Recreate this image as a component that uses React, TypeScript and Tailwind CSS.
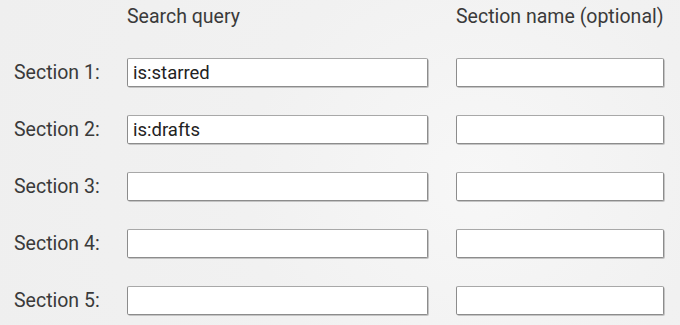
const rows = [
  { label: 'Section 1:', query: 'is:starred' },
  { label: 'Section 2:', query: 'is:drafts' },
  { label: 'Section 3:', query: '' },
  { label: 'Section 4:', query: '' },
  { label: 'Section 5:', query: '' },
]

const inputClass =
  'h-[29px] w-full rounded-[2px] border border-[#8c8c8c] border-t-[#a8a8a8] bg-white px-[5px] text-[18.5px] text-[#222] shadow-[1px_1px_0_#c4c4c4] outline-none'

export default function App() {
  return (
    <div
      className="h-[325px] w-[680px] overflow-hidden bg-[#f2f2f2] bg-[radial-gradient(circle_at_70%_55%,#f7f7f7_0%,#f1f1f1_45%,#efefef_100%)] pl-[14px] pt-[3px] text-[#3a3a3a]"
      style={{ fontFamily: 'Roboto, "Noto Sans", sans-serif' }}
    >
      <div className="grid grid-cols-[85px_301px_208px] items-center gap-x-[28px] gap-y-[28px] text-[19.5px]">
        <div className="h-[27px]" />
        <div className="flex h-[27px] items-center">Search query</div>
        <div className="flex h-[27px] items-center whitespace-nowrap">Section name (optional)</div>
        {rows.map((r) => (
          <Row key={r.label} label={r.label} query={r.query} />
        ))}
      </div>
    </div>
  )
}

function Row({ label, query }: { label: string; query: string }) {
  return (
    <>
      <div className="flex h-[29px] items-center whitespace-nowrap">{label}</div>
      <input className={inputClass} defaultValue={query} />
      <input className={inputClass} defaultValue="" />
    </>
  )
}
